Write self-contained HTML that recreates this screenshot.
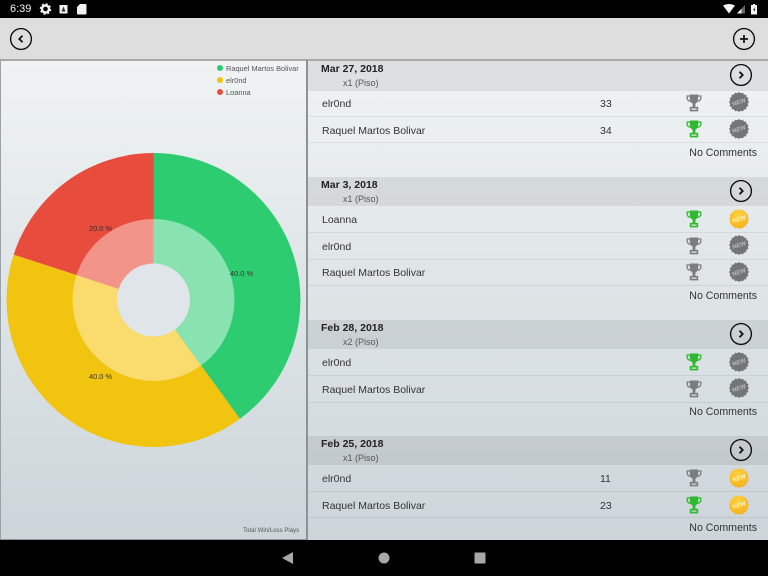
<!DOCTYPE html>
<html><head><meta charset="utf-8"><style>
html,body{margin:0;padding:0}
body{width:768px;height:576px;overflow:hidden;position:relative;background:#000;font-family:"Liberation Sans",sans-serif}
.a{position:absolute}
#status{left:0;top:0;width:768px;height:18px;background:#000}
#tool{left:0;top:18px;width:768px;height:41px;background:#dedede;border-bottom:2px solid #a9a9a9}
#bg{left:0;top:61px;width:768px;height:479px;background:linear-gradient(#eff3f3,#cdd5da)}
#div{left:306px;top:60px;width:1.5px;height:480px;background:#8b9396}
.h{position:absolute;left:308px;width:460px;background:rgba(0,0,0,.075)}
.d{position:absolute;left:321px;font:bold 10.5px "Liberation Sans",sans-serif;color:#222;white-space:nowrap}
.s{position:absolute;left:343px;font:9px "Liberation Sans",sans-serif;color:#555;white-space:nowrap}
.n{position:absolute;left:322px;font:10.5px "Liberation Sans",sans-serif;color:#333;white-space:nowrap}
.sc{position:absolute;left:600px;font:10.5px "Liberation Sans",sans-serif;color:#333}
.l{position:absolute;left:308px;width:460px;height:1px;background:rgba(0,0,0,.07)}
.c{position:absolute;right:11px;font:10.6px "Liberation Sans",sans-serif;color:#333;white-space:nowrap}
.leg{position:absolute;left:226px;font:7.4px "Liberation Sans",sans-serif;color:#555;white-space:nowrap}
.dot{position:absolute;left:217px;width:6px;height:6px;border-radius:50%}
.pct{font:7.4px "Liberation Sans",sans-serif;fill:#333}
.bt{font:bold 6px "Liberation Sans",sans-serif}
</style></head><body>
<svg width="0" height="0" style="position:absolute"><defs>
<symbol id="tr" viewBox="0 0 16 18"><path d="M4.500 2H1.200v2.200c0 1.800 1.300 2.800 3.800 3.300M11.500 2h3.300v2.200c0 1.800-1.300 2.800-3.800 3.300" fill="none" stroke="currentColor" stroke-width="1.300"/><path d="M3.800.5h8.400v3.500c0 3-1.500 5-2.800 5.700V13H6.600V9.700C5.300 9 3.800 7 3.800 4z" fill="currentColor"/><path d="M4.600 13.700h6.800v2.900H4.600z" fill="none" stroke="currentColor" stroke-width="1.600"/></symbol>
<symbol id="gr" viewBox="0 0 20 20"><path d="M10 0l1.800 1.300 2.100-.6 1.100 1.900 2.200.2.300 2.200 1.900 1.100-.6 2.100L20 10l-1.300 1.800.6 2.100-1.900 1.100-.2 2.200-2.200.3-1.100 1.900-2.100-.6L10 20l-1.800-1.300-2.100.6-1.100-1.900-2.200-.2-.3-2.200-1.900-1.100.6-2.100L0 10l1.300-1.800-.6-2.100 1.900-1.100.2-2.200 2.200-.3L6.100.6l2.100.6z" fill="#737678"/></symbol>
<radialGradient id="yg" cx=".45" cy=".3" r=".75"><stop offset="0" stop-color="#ffd23f"/><stop offset="1" stop-color="#f6ae17"/></radialGradient>
<symbol id="yl" viewBox="0 0 20 20"><path d="M10 0l1.800 1.300 2.100-.6 1.100 1.900 2.200.2.300 2.200 1.900 1.100-.6 2.100L20 10l-1.300 1.800.6 2.100-1.900 1.100-.2 2.200-2.200.3-1.100 1.900-2.100-.6L10 20l-1.800-1.300-2.100.6-1.100-1.900-2.200-.2-.3-2.200-1.900-1.100.6-2.100L0 10l1.300-1.800-.6-2.100 1.900-1.100.2-2.200 2.200-.3L6.100.6l2.100.6z" fill="url(#yg)"/></symbol>
<symbol id="nx" viewBox="0 0 24 24"><circle cx="12" cy="12" r="10.400" fill="none" stroke="#111" stroke-width="1.400"/><path d="M10.500 8.800l3.200 3.200-3.200 3.200" fill="none" stroke="#111" stroke-width="1.800"/></symbol>
</defs></svg>

<div class="a" id="status"></div>
<div class="a" style="left:10px;top:3px;color:#f4f4f4;font:11px 'Liberation Sans',sans-serif">6:39</div>
<svg class="a" style="left:39px;top:3px" width="48" height="13" viewBox="0 0 48 13">
<circle cx="6.500" cy="6" r="3.500" fill="none" stroke="#f2f2f2" stroke-width="2.400"/><circle cx="6.500" cy="6" r="5" fill="none" stroke="#f2f2f2" stroke-width="1.600" stroke-dasharray="2 1.930"/>
<rect x="20.500" y="2" width="8" height="8.500" fill="#f2f2f2"/><path d="M24.500 3.500l-2 5h4z" fill="#333"/>
<path d="M41 1h5.500a1 1 0 0 1 1 1v8.500a1 1 0 0 1-1 1H39a1 1 0 0 1-1-1V4z" fill="#f2f2f2"/></svg>
<svg class="a" style="left:722px;top:3px" width="44" height="13" viewBox="0 0 44 13">
<path d="M1 2.500Q7-.5 13 2.500L7 10.500z" fill="#f5f5f5"/><path d="M15 10.500l8-8.500v8.500z" fill="#666"/><path d="M15 10.500l4.500-4.800v4.800z" fill="#f5f5f5"/>
<path d="M29 2h2V1h2v1h2v9.500h-6z" fill="#f5f5f5"/><path d="M32.500 4L31 7h1v2l1.500-3h-1z" fill="#333"/></svg>

<div class="a" id="tool"></div>
<div class="a" id="bg"></div>
<svg class="a" style="left:9px;top:27px" width="24" height="24"><circle cx="12" cy="12" r="10.400" fill="none" stroke="#111" stroke-width="1.400"/><path d="M13.500 8.800L10.300 12l3.200 3.200" fill="none" stroke="#111" stroke-width="1.800"/></svg>
<svg class="a" style="left:732px;top:27px" width="24" height="24"><circle cx="12" cy="12" r="10.400" fill="none" stroke="#111" stroke-width="1.400"/><path d="M12 8v8M8 12h8" fill="none" stroke="#111" stroke-width="1.700"/></svg>

<div class="a" style="left:0;top:60px;width:1px;height:480px;background:#9aa2a5"></div>
<div class="a" id="div"></div>
<div class="a" style="left:0;top:539px;width:307px;height:1px;background:#8b9396"></div>

<div class="dot" style="top:65px;background:#2ecc71"></div><div class="leg" style="top:64px">Raquel Martos Bolivar</div>
<div class="dot" style="top:77px;background:#f1c40f"></div><div class="leg" style="top:76px">elr0nd</div>
<div class="dot" style="top:89px;background:#e74c3c"></div><div class="leg" style="top:88px">Loanna</div>

<svg class="a" style="left:0;top:60px" width="307" height="480" viewBox="0 60 307 480">
<path d="M153.500 300V153A147 147 0 0 1 239.900 418.900z" fill="#2ecc71"/>
<path d="M153.500 300L239.900 418.900A147 147 0 0 1 13.700 254.600z" fill="#f1c40f"/>
<path d="M153.500 300L13.700 254.600A147 147 0 0 1 153.500 153z" fill="#e74c3c"/>
<path d="M153.500 300V219A81 81 0 0 1 201.100 365.500z" fill="#88e3b0"/>
<path d="M153.500 300L201.100 365.500A81 81 0 0 1 76.500 275z" fill="#f9dc6d"/>
<path d="M153.500 300L76.500 275A81 81 0 0 1 153.500 219z" fill="#f3948a"/>
<circle cx="153.500" cy="300" r="36.500" fill="#dfe5e9"/>
<text class="pct" x="230" y="276">40.0 %</text>
<text class="pct" x="89" y="379">40.0 %</text>
<text class="pct" x="89" y="231">20.0 %</text>
</svg>
<div class="a" style="left:243px;top:527px;font:6.100px 'Liberation Sans',sans-serif;color:#555;white-space:nowrap">Total Win/Loss Plays</div>

<div class="h" style="top:61px;height:30px"></div>
<div class="h" style="top:177px;height:29px"></div>
<div class="h" style="top:320px;height:29px"></div>
<div class="h" style="top:436px;height:29px"></div>

<div class="d" style="top:63px">Mar 27, 2018</div><div class="s" style="top:78px">x1 (Piso)</div>
<div class="d" style="top:179px">Mar 3, 2018</div><div class="s" style="top:194px">x1 (Piso)</div>
<div class="d" style="top:322px">Feb 28, 2018</div><div class="s" style="top:337px">x2 (Piso)</div>
<div class="d" style="top:438px">Feb 25, 2018</div><div class="s" style="top:453px">x1 (Piso)</div>

<svg class="a" style="left:729px;top:63px" width="24" height="24"><use href="#nx"/></svg>
<svg class="a" style="left:729px;top:179px" width="24" height="24"><use href="#nx"/></svg>
<svg class="a" style="left:729px;top:322px" width="24" height="24"><use href="#nx"/></svg>
<svg class="a" style="left:729px;top:438px" width="24" height="24"><use href="#nx"/></svg>

<div class="l" style="top:116px"></div><div class="l" style="top:142px"></div>
<div class="l" style="top:232px"></div><div class="l" style="top:259px"></div><div class="l" style="top:285px"></div>
<div class="l" style="top:375px"></div><div class="l" style="top:402px"></div>
<div class="l" style="top:491px"></div><div class="l" style="top:517px"></div>

<div class="n" style="top:98px">elr0nd</div><div class="sc" style="top:98px">33</div>
<div class="n" style="top:125px">Raquel Martos Bolivar</div><div class="sc" style="top:125px">34</div>
<div class="c" style="top:147px">No Comments</div>
<div class="n" style="top:214px">Loanna</div>
<div class="n" style="top:241px">elr0nd</div>
<div class="n" style="top:267px">Raquel Martos Bolivar</div>
<div class="c" style="top:290px">No Comments</div>
<div class="n" style="top:357px">elr0nd</div>
<div class="n" style="top:384px">Raquel Martos Bolivar</div>
<div class="c" style="top:406px">No Comments</div>
<div class="n" style="top:473px">elr0nd</div><div class="sc" style="top:473px">11</div>
<div class="n" style="top:500px">Raquel Martos Bolivar</div><div class="sc" style="top:500px">23</div>
<div class="c" style="top:522px">No Comments</div>

<svg class="a" style="left:686px;top:94px;color:#7a7d80" width="16" height="18"><use href="#tr"/></svg>
<svg class="a" style="left:686px;top:120px;color:#2eb82e" width="16" height="18"><use href="#tr"/></svg>
<svg class="a" style="left:686px;top:210px;color:#2eb82e" width="16" height="18"><use href="#tr"/></svg>
<svg class="a" style="left:686px;top:237px;color:#7a7d80" width="16" height="18"><use href="#tr"/></svg>
<svg class="a" style="left:686px;top:263px;color:#7a7d80" width="16" height="18"><use href="#tr"/></svg>
<svg class="a" style="left:686px;top:353px;color:#2eb82e" width="16" height="18"><use href="#tr"/></svg>
<svg class="a" style="left:686px;top:380px;color:#7a7d80" width="16" height="18"><use href="#tr"/></svg>
<svg class="a" style="left:686px;top:469px;color:#7a7d80" width="16" height="18"><use href="#tr"/></svg>
<svg class="a" style="left:686px;top:496px;color:#2eb82e" width="16" height="18"><use href="#tr"/></svg>

<svg class="a" style="left:729px;top:92px" width="20" height="20"><use href="#gr"/><text class="bt" x="10" y="12" text-anchor="middle" fill="#b8b8b8" transform="rotate(-18 10 10)">NEW</text></svg>
<svg class="a" style="left:729px;top:119px" width="20" height="20"><use href="#gr"/><text class="bt" x="10" y="12" text-anchor="middle" fill="#b8b8b8" transform="rotate(-18 10 10)">NEW</text></svg>
<svg class="a" style="left:729px;top:209px" width="20" height="20"><use href="#yl"/><text class="bt" x="10" y="12" text-anchor="middle" fill="#fff3c0" transform="rotate(-18 10 10)">NEW</text></svg>
<svg class="a" style="left:729px;top:235px" width="20" height="20"><use href="#gr"/><text class="bt" x="10" y="12" text-anchor="middle" fill="#b8b8b8" transform="rotate(-18 10 10)">NEW</text></svg>
<svg class="a" style="left:729px;top:262px" width="20" height="20"><use href="#gr"/><text class="bt" x="10" y="12" text-anchor="middle" fill="#b8b8b8" transform="rotate(-18 10 10)">NEW</text></svg>
<svg class="a" style="left:729px;top:352px" width="20" height="20"><use href="#gr"/><text class="bt" x="10" y="12" text-anchor="middle" fill="#b8b8b8" transform="rotate(-18 10 10)">NEW</text></svg>
<svg class="a" style="left:729px;top:378px" width="20" height="20"><use href="#gr"/><text class="bt" x="10" y="12" text-anchor="middle" fill="#b8b8b8" transform="rotate(-18 10 10)">NEW</text></svg>
<svg class="a" style="left:729px;top:468px" width="20" height="20"><use href="#yl"/><text class="bt" x="10" y="12" text-anchor="middle" fill="#fff3c0" transform="rotate(-18 10 10)">NEW</text></svg>
<svg class="a" style="left:729px;top:495px" width="20" height="20"><use href="#yl"/><text class="bt" x="10" y="12" text-anchor="middle" fill="#fff3c0" transform="rotate(-18 10 10)">NEW</text></svg>

<svg class="a" style="left:0;top:540px" width="768" height="36">
<path d="M293 12v12l-11-6z" fill="#a8a8a8"/><circle cx="384" cy="18" r="5.500" fill="#a8a8a8"/><rect x="474.500" y="12.500" width="11" height="11" rx="1" fill="#a8a8a8"/>
</svg>
</body></html>
